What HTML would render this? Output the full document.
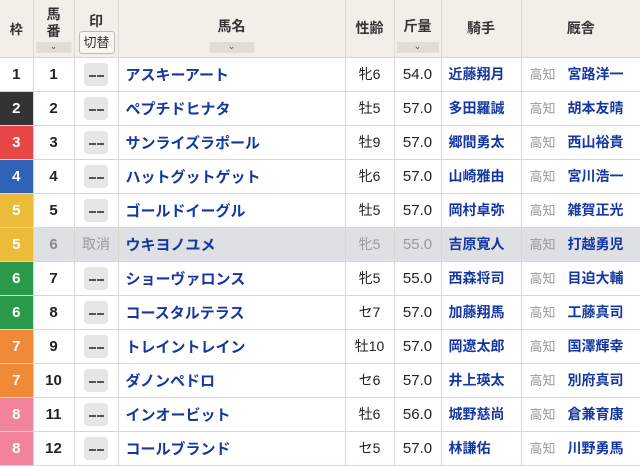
<!DOCTYPE html>
<html><head><meta charset="utf-8"><style>
*{margin:0;padding:0;box-sizing:border-box}
body{width:640px;height:466px;overflow:hidden;background:#fff;font-family:"Liberation Sans","Noto Sans CJK JP",sans-serif;}
table{border-collapse:collapse;table-layout:fixed;width:640px;position:absolute;left:0;top:0}
td,th{border:1px solid #dcd8d0;text-align:center;vertical-align:middle;overflow:hidden;white-space:nowrap}
tr:first-child th{border-top:none}
td:first-child,th:first-child{border-left:none}
td:last-child,th:last-child{border-right:none}
th{background:#f2efe9;height:57px;font-size:13px;font-weight:bold;color:#333;position:relative}
td{height:34px;font-size:15px;color:#222}
.arr{position:absolute;bottom:4px;left:50%;transform:translateX(-50%);background:#e0ddd6;height:11px;font-size:9px;line-height:8px;color:#555;font-weight:normal}
.w{font-weight:bold;color:#fff;font-size:15px}
.n{font-weight:bold}
.m{display:inline-block;width:24px;height:23px;background:#e6e6e6;border-radius:4px;position:relative;vertical-align:middle}
.m:before,.m:after{content:"";position:absolute;top:12px;width:7px;height:2px;background:#555}
.m:before{left:5px}.m:after{left:13px}
.h{text-align:left;padding-left:7px;color:#1537a0;font-weight:bold;font-size:15px}
.j{color:#1537a0;font-weight:bold;font-size:14px;text-align:left;padding-left:7px}
.s{text-align:left;padding-left:8px;font-size:14px}
.s span{color:#999;font-size:13px;margin-right:12px}
.s b{color:#1537a0}
.sx{font-size:14px}
.c td{background:#dfe0e4}
</style></head><body>
<table>
<colgroup><col style="width:33px"><col style="width:41px"><col style="width:44px"><col style="width:227px"><col style="width:49px"><col style="width:47px"><col style="width:80px"><col style="width:119px"></colgroup>
<tr>
<th>枠</th>
<th style="line-height:17px;padding-bottom:10px;font-size:14px">馬<br>番<div class="arr" style="width:35px">⌄</div></th>
<th style="padding-bottom:0"><div style="margin-top:-14px;font-size:14px">印</div><div style="position:absolute;left:4px;top:31px;width:36px;height:23px;border:1px solid #bbb;border-radius:3px;background:#f7f5f0;font-size:13px;font-weight:normal;line-height:21px">切替</div></th>
<th style="padding-bottom:4px;font-size:14px">馬名<div class="arr" style="width:45px">⌄</div></th>
<th style="font-size:14px">性齢</th>
<th style="padding-bottom:4px;font-size:14px">斤量<div class="arr" style="width:42px">⌄</div></th>
<th style="font-size:14px">騎手</th>
<th style="font-size:14px">厩舎</th>
</tr>
<tr><td class="n" style="color:#222">1</td><td class="n">1</td><td><span class="m"></span></td><td class="h">アスキーアート</td><td class="sx">牝6</td><td>54.0</td><td class="j">近藤翔月</td><td class="s"><span>高知</span><b>宮路洋一</b></td></tr>
<tr><td class="w" style="background:#333">2</td><td class="n">2</td><td><span class="m"></span></td><td class="h">ペプチドヒナタ</td><td class="sx">牡5</td><td>57.0</td><td class="j">多田羅誠</td><td class="s"><span>高知</span><b>胡本友晴</b></td></tr>
<tr><td class="w" style="background:#e84545">3</td><td class="n">3</td><td><span class="m"></span></td><td class="h">サンライズラポール</td><td class="sx">牡9</td><td>57.0</td><td class="j">郷間勇太</td><td class="s"><span>高知</span><b>西山裕貴</b></td></tr>
<tr><td class="w" style="background:#2f62b8">4</td><td class="n">4</td><td><span class="m"></span></td><td class="h">ハットグットゲット</td><td class="sx">牝6</td><td>57.0</td><td class="j">山崎雅由</td><td class="s"><span>高知</span><b>宮川浩一</b></td></tr>
<tr><td class="w" style="background:#ecbb3a">5</td><td class="n">5</td><td><span class="m"></span></td><td class="h">ゴールドイーグル</td><td class="sx">牡5</td><td>57.0</td><td class="j">岡村卓弥</td><td class="s"><span>高知</span><b>雑賀正光</b></td></tr>
<tr class="c"><td class="w" style="background:#ecbb3a">5</td><td class="n" style="color:#888">6</td><td style="color:#999;font-size:14px">取消</td><td class="h">ウキヨノユメ</td><td class="sx" style="color:#999">牝5</td><td style="color:#999">55.0</td><td class="j">吉原寛人</td><td class="s"><span>高知</span><b>打越勇児</b></td></tr>
<tr><td class="w" style="background:#2a9a4a">6</td><td class="n">7</td><td><span class="m"></span></td><td class="h">ショーヴァロンス</td><td class="sx">牝5</td><td>55.0</td><td class="j">西森将司</td><td class="s"><span>高知</span><b>目迫大輔</b></td></tr>
<tr><td class="w" style="background:#2a9a4a">6</td><td class="n">8</td><td><span class="m"></span></td><td class="h">コースタルテラス</td><td class="sx">セ7</td><td>57.0</td><td class="j">加藤翔馬</td><td class="s"><span>高知</span><b>工藤真司</b></td></tr>
<tr><td class="w" style="background:#f08a36">7</td><td class="n">9</td><td><span class="m"></span></td><td class="h">トレイントレイン</td><td class="sx">牡10</td><td>57.0</td><td class="j">岡遼太郎</td><td class="s"><span>高知</span><b>国澤輝幸</b></td></tr>
<tr><td class="w" style="background:#f08a36">7</td><td class="n">10</td><td><span class="m"></span></td><td class="h">ダノンペドロ</td><td class="sx">セ6</td><td>57.0</td><td class="j">井上瑛太</td><td class="s"><span>高知</span><b>別府真司</b></td></tr>
<tr><td class="w" style="background:#f2849a">8</td><td class="n">11</td><td><span class="m"></span></td><td class="h">インオービット</td><td class="sx">牡6</td><td>56.0</td><td class="j">城野慈尚</td><td class="s"><span>高知</span><b>倉兼育康</b></td></tr>
<tr><td class="w" style="background:#f2849a">8</td><td class="n">12</td><td><span class="m"></span></td><td class="h">コールブランド</td><td class="sx">セ5</td><td>57.0</td><td class="j">林謙佑</td><td class="s"><span>高知</span><b>川野勇馬</b></td></tr>
</table>
</body></html>
